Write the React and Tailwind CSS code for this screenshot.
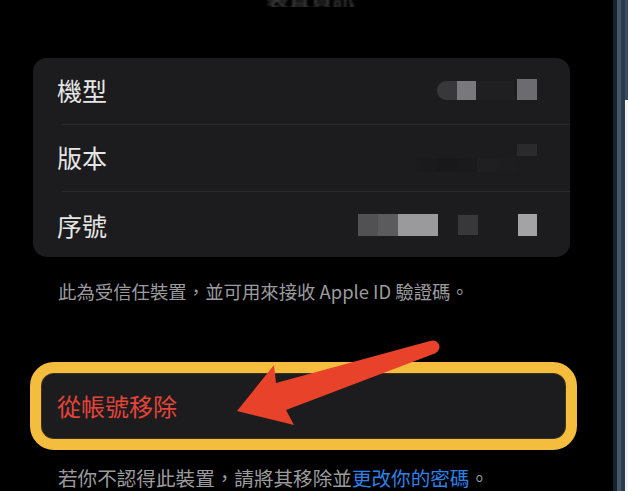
const cjk = { fontFamily: '"Noto Sans CJK TC", "Noto Sans", sans-serif' };

function Blocks({ items }) {
  return (
    <div className="flex items-center">
      {items.map((b, i) => (
        <div key={i} className={b} />
      ))}
    </div>
  );
}

function Row({ label, last, children }) {
  return (
    <div className="flex h-[67px] flex-col">
      <div className="flex flex-1 items-center justify-between pl-[24px] pr-[33px]">
        <span className="text-[25px] leading-none text-[#e6e6e6]">{label}</span>
        {children}
      </div>
      {!last && <div className="ml-[29px] h-px bg-[#2a2a2c]" />}
    </div>
  );
}

function Arrow() {
  return (
    <svg className="pointer-events-none absolute left-0 top-0" width="628" height="491" viewBox="0 0 628 491">
      <polygon
        fill="#e9422a"
        points="237,411 274,365 276,383 430,341 436,353 286,410 294,425"
      />
      <circle cx="433" cy="347" r="6.5" fill="#e9422a" />
    </svg>
  );
}

export default function App() {
  return (
    <div className="relative flex h-[491px] w-[628px] overflow-hidden bg-black" style={cjk}>
      <div className="flex w-[613px] flex-col">
        <div className="flex h-[7px] justify-center overflow-hidden pl-[8px]">
          <span className="-mt-[15px] text-[22px] leading-none text-[#4a4a4c] blur-[1px]">裝置資訊</span>
        </div>

        <div className="ml-[33px] mt-[51px] w-[537px] overflow-hidden rounded-[14px] bg-[#1c1c1e]">
          <Row label="機型">
            <div className="relative flex items-center">
              <div className="h-[19px] w-[20px] rounded-l-full bg-[#38383b]" />
              <div className="h-[19px] w-[19px] bg-[#79797d]" />
              <div className="h-[19px] w-[38px] bg-[#1f1f22]" />
              <div className="ml-[3px] -mt-[2px] h-[21px] w-[20px] bg-[#6c6c70]" />
            </div>
          </Row>
          <Row label="版本">
            <div className="flex flex-col items-end gap-[2px] opacity-90">
              <div className="h-[12px] w-[20px] bg-[#2c2c2f]" />
              <Blocks
                items={[
                  "h-[14px] w-[20px] bg-[#1a1a1c]",
                  "h-[14px] w-[20px] bg-[#18181a]",
                  "h-[14px] w-[20px] bg-[#1a1a1d]",
                  "h-[14px] w-[20px] bg-[#202023]",
                  "h-[14px] w-[20px] bg-[#1e1e20]",
                  "h-[14px] w-[20px] bg-[#1d1d1f]",
                ]}
              />
            </div>
          </Row>
          <Row label="序號" last>
            <Blocks
              items={[
                "h-[22px] w-[20px] bg-[#515154]",
                "h-[22px] w-[20px] bg-[#5b5b5e]",
                "h-[22px] w-[40px] bg-[#9a9a9c]",
                "h-[22px] w-[20px] bg-[#1c1c1e]",
                "h-[20px] w-[20px] bg-[#38383a]",
                "h-[22px] w-[40px] bg-[#1c1c1e]",
                "h-[22px] w-[19px] bg-[#a3a3a5]",
              ]}
            />
          </Row>
        </div>

        <p className="ml-[58px] mt-[22px] text-[18.4px] leading-[24px] text-[#9b9b9e]">
          此為受信任裝置，並可用來接收 Apple ID 驗證碼。
        </p>

        <div className="ml-[30px] mt-[59px] w-[547px] rounded-[24px] border-[12px] border-[#f4bd3e] bg-[#2a2416]">
          <div className="flex h-[64px] items-center rounded-[12px] bg-[#1c1c1e] pl-[15px] ring-1 ring-[#3a3320]">
            <span className="text-[24px] leading-none text-[#e5443a]">從帳號移除</span>
          </div>
        </div>

        <p className="ml-[58px] mt-[15px] text-[19.6px] leading-[26px] text-[#9b9b9e]">
          若你不認得此裝置，請將其移除並<span className="text-[#2f80e6]">更改你的密碼</span>。
        </p>
      </div>

      <div className="flex w-[15px]">
        <div className="w-[4px] bg-[#17212b]" />
        <div className="w-[4px] bg-[#42596d]" />
        <div className="w-[4px] bg-[#2b3b4a]" />
        <div className="flex w-[3px] flex-col">
          <div className="h-[100px] bg-[#3a4e60]" />
          <div className="flex-1 bg-[#f2f4f6]" />
        </div>
      </div>

      <Arrow />
    </div>
  );
}
